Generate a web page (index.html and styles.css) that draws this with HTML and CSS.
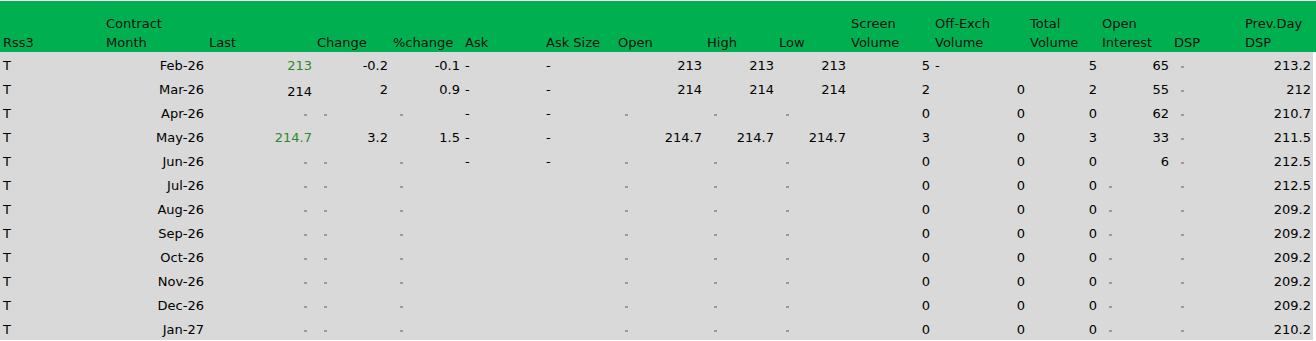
FILE: index.html
```html
<!DOCTYPE html>
<html lang="en">
<head>
<meta charset="utf-8">
<title>Rss3</title>
<link rel="stylesheet" href="styles.css">
</head>
<body>
<div class="sheet">
  <div class="row head">
    <div class="c">Rss3</div>
    <div class="c">Contract<br>Month</div>
    <div class="c">Last</div>
    <div class="c">Change</div>
    <div class="c">%change</div>
    <div class="c">Ask</div>
    <div class="c">Ask Size</div>
    <div class="c">Open</div>
    <div class="c">High</div>
    <div class="c">Low</div>
    <div class="c">Screen<br>Volume</div>
    <div class="c">Off-Exch<br>Volume</div>
    <div class="c">Total<br>Volume</div>
    <div class="c">Open<br>Interest</div>
    <div class="c">DSP</div>
    <div class="c">Prev.Day<br>DSP</div>
  </div>

  <div class="row data">
    <div class="c">T</div><div class="c r">Feb-26</div><div class="c r g">213</div><div class="c r">-0.2</div><div class="c r">-0.1</div><div class="c">-</div><div class="c">-</div><div class="c r">213</div><div class="c r">213</div><div class="c r">213</div><div class="c r">5</div><div class="c">-</div><div class="c r">5</div><div class="c r">65</div><div class="c"><span class="nil"></span></div><div class="c r">213.2</div>
  </div>
  <div class="row data">
    <div class="c">T</div><div class="c r">Mar-26</div><div class="c r drop">214</div><div class="c r">2</div><div class="c r">0.9</div><div class="c">-</div><div class="c">-</div><div class="c r">214</div><div class="c r">214</div><div class="c r">214</div><div class="c r">2</div><div class="c r">0</div><div class="c r">2</div><div class="c r">55</div><div class="c"><span class="nil"></span></div><div class="c r">212</div>
  </div>
  <div class="row data">
    <div class="c">T</div><div class="c r">Apr-26</div><div class="c r"><span class="nil"></span></div><div class="c"><span class="nil"></span></div><div class="c"><span class="nil"></span></div><div class="c">-</div><div class="c">-</div><div class="c"><span class="nil"></span></div><div class="c"><span class="nil"></span></div><div class="c"><span class="nil"></span></div><div class="c r">0</div><div class="c r">0</div><div class="c r">0</div><div class="c r">62</div><div class="c"><span class="nil"></span></div><div class="c r">210.7</div>
  </div>
  <div class="row data">
    <div class="c">T</div><div class="c r">May-26</div><div class="c r g">214.7</div><div class="c r">3.2</div><div class="c r">1.5</div><div class="c">-</div><div class="c">-</div><div class="c r">214.7</div><div class="c r">214.7</div><div class="c r">214.7</div><div class="c r">3</div><div class="c r">0</div><div class="c r">3</div><div class="c r">33</div><div class="c"><span class="nil"></span></div><div class="c r">211.5</div>
  </div>
  <div class="row data">
    <div class="c">T</div><div class="c r">Jun-26</div><div class="c r"><span class="nil"></span></div><div class="c"><span class="nil"></span></div><div class="c"><span class="nil"></span></div><div class="c">-</div><div class="c">-</div><div class="c"><span class="nil"></span></div><div class="c"><span class="nil"></span></div><div class="c"><span class="nil"></span></div><div class="c r">0</div><div class="c r">0</div><div class="c r">0</div><div class="c r">6</div><div class="c"><span class="nil"></span></div><div class="c r">212.5</div>
  </div>
  <div class="row data">
    <div class="c">T</div><div class="c r">Jul-26</div><div class="c r"><span class="nil"></span></div><div class="c"><span class="nil"></span></div><div class="c"><span class="nil"></span></div><div class="c"></div><div class="c"></div><div class="c"><span class="nil"></span></div><div class="c"><span class="nil"></span></div><div class="c"><span class="nil"></span></div><div class="c r">0</div><div class="c r">0</div><div class="c r">0</div><div class="c"><span class="nil"></span></div><div class="c"><span class="nil"></span></div><div class="c r">212.5</div>
  </div>
  <div class="row data">
    <div class="c">T</div><div class="c r">Aug-26</div><div class="c r"><span class="nil"></span></div><div class="c"><span class="nil"></span></div><div class="c"><span class="nil"></span></div><div class="c"></div><div class="c"></div><div class="c"><span class="nil"></span></div><div class="c"><span class="nil"></span></div><div class="c"><span class="nil"></span></div><div class="c r">0</div><div class="c r">0</div><div class="c r">0</div><div class="c"><span class="nil"></span></div><div class="c"><span class="nil"></span></div><div class="c r">209.2</div>
  </div>
  <div class="row data">
    <div class="c">T</div><div class="c r">Sep-26</div><div class="c r"><span class="nil"></span></div><div class="c"><span class="nil"></span></div><div class="c"><span class="nil"></span></div><div class="c"></div><div class="c"></div><div class="c"><span class="nil"></span></div><div class="c"><span class="nil"></span></div><div class="c"><span class="nil"></span></div><div class="c r">0</div><div class="c r">0</div><div class="c r">0</div><div class="c"><span class="nil"></span></div><div class="c"><span class="nil"></span></div><div class="c r">209.2</div>
  </div>
  <div class="row data">
    <div class="c">T</div><div class="c r">Oct-26</div><div class="c r"><span class="nil"></span></div><div class="c"><span class="nil"></span></div><div class="c"><span class="nil"></span></div><div class="c"></div><div class="c"></div><div class="c"><span class="nil"></span></div><div class="c"><span class="nil"></span></div><div class="c"><span class="nil"></span></div><div class="c r">0</div><div class="c r">0</div><div class="c r">0</div><div class="c"><span class="nil"></span></div><div class="c"><span class="nil"></span></div><div class="c r">209.2</div>
  </div>
  <div class="row data">
    <div class="c">T</div><div class="c r">Nov-26</div><div class="c r"><span class="nil"></span></div><div class="c"><span class="nil"></span></div><div class="c"><span class="nil"></span></div><div class="c"></div><div class="c"></div><div class="c"><span class="nil"></span></div><div class="c"><span class="nil"></span></div><div class="c"><span class="nil"></span></div><div class="c r">0</div><div class="c r">0</div><div class="c r">0</div><div class="c"><span class="nil"></span></div><div class="c"><span class="nil"></span></div><div class="c r">209.2</div>
  </div>
  <div class="row data">
    <div class="c">T</div><div class="c r">Dec-26</div><div class="c r"><span class="nil"></span></div><div class="c"><span class="nil"></span></div><div class="c"><span class="nil"></span></div><div class="c"></div><div class="c"></div><div class="c"><span class="nil"></span></div><div class="c"><span class="nil"></span></div><div class="c"><span class="nil"></span></div><div class="c r">0</div><div class="c r">0</div><div class="c r">0</div><div class="c"><span class="nil"></span></div><div class="c"><span class="nil"></span></div><div class="c r">209.2</div>
  </div>
  <div class="row data">
    <div class="c">T</div><div class="c r">Jan-27</div><div class="c r"><span class="nil"></span></div><div class="c"><span class="nil"></span></div><div class="c"><span class="nil"></span></div><div class="c"></div><div class="c"></div><div class="c"><span class="nil"></span></div><div class="c"><span class="nil"></span></div><div class="c"><span class="nil"></span></div><div class="c r">0</div><div class="c r">0</div><div class="c r">0</div><div class="c"><span class="nil"></span></div><div class="c"><span class="nil"></span></div><div class="c r">210.2</div>
  </div>
</div>
</body>
</html>
```

FILE: styles.css
```css
html, body {
  margin: 0;
  background: #ffffff;
}

body {
  font-family: "DejaVu Sans", "Verdana", sans-serif;
  font-size: 13px;
  color: #000000;
}

.sheet {
  width: 1316px;
  padding-top: 1px;
}

.row {
  display: grid;
  grid-template-columns: 103px 103px 108px 76px 72px 81px 72px 89px 72px 72px 84px 95px 72px 72px 71px 1fr;
}

.head {
  background: #00b050;
  height: 51px;
  align-items: end;
  line-height: 19px;
  color: #111111;
}

.data {
  width: 1313px;
  height: 24px;
  background: #d9d9d9;
  line-height: 21px;
}

.c {
  padding: 0 2px 0 3px;
  white-space: nowrap;
  overflow: hidden;
}

.data .c {
  padding-top: 3px;
}

.data .drop {
  padding-top: 5px;
}

.r {
  text-align: right;
}

.g {
  color: #2b8a2b;
}

.nil {
  display: inline-block;
  width: 3px;
  height: 2px;
  background: #9a9a9a;
  vertical-align: 2px;
  margin-left: 7px;
}

.r .nil {
  margin-left: 0;
  margin-right: 5px;
}
```
